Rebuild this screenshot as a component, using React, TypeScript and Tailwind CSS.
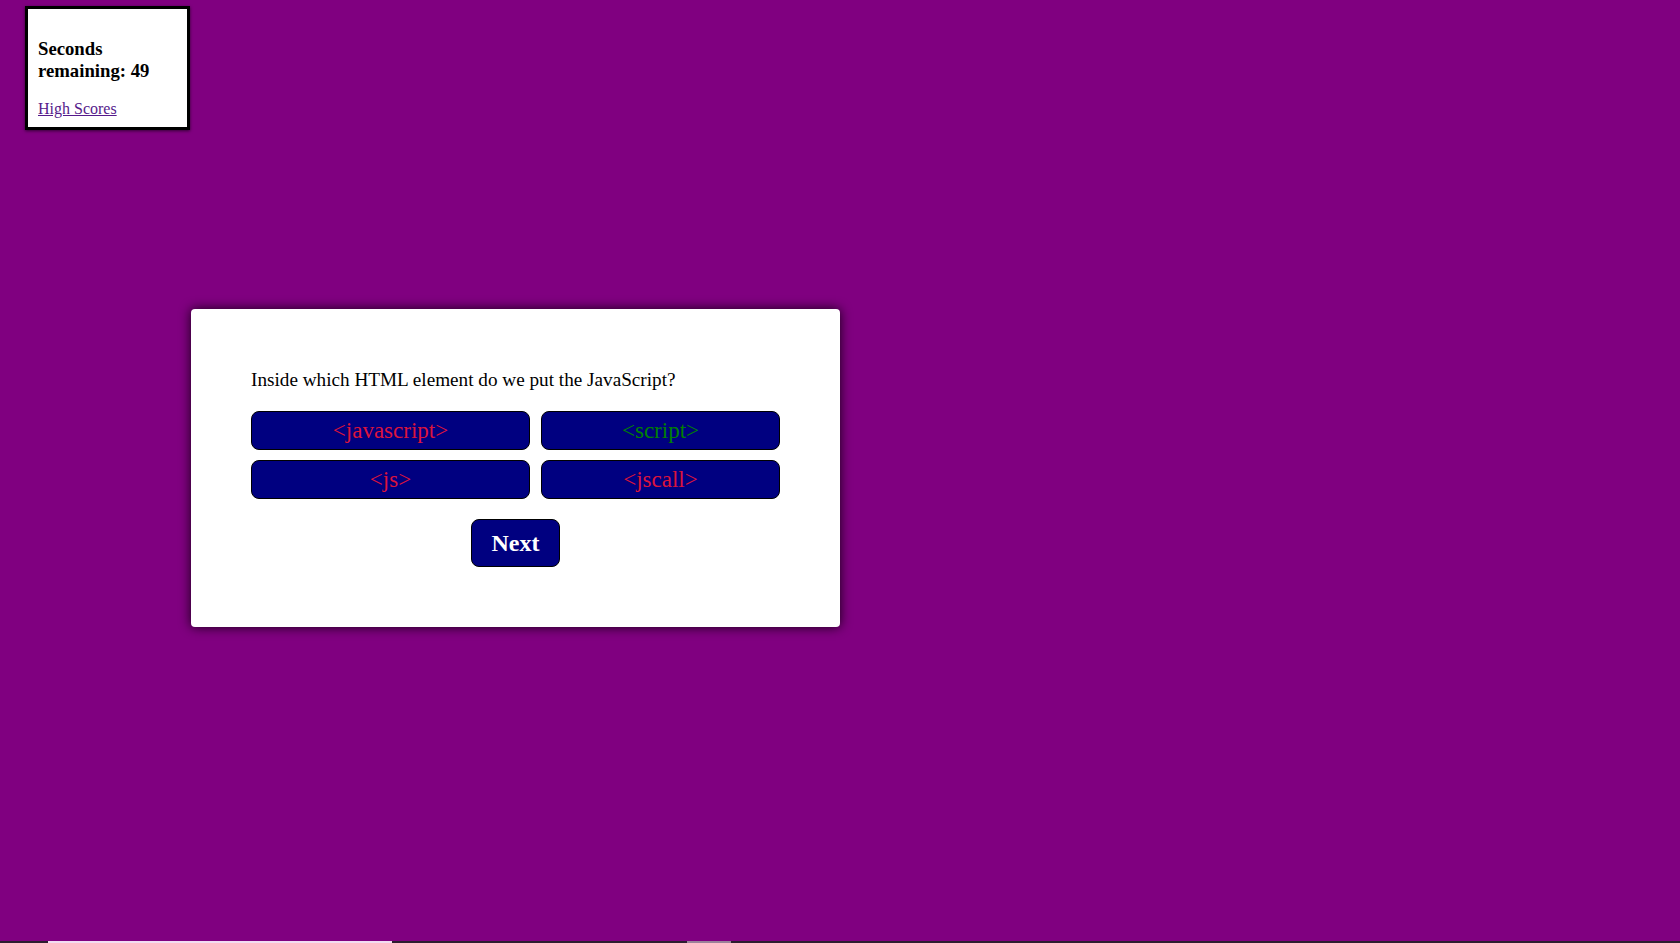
const OPTIONS = [
  { label: "<javascript>", color: "text-[#dc143c]" },
  { label: "<script>", color: "text-[#008000]" },
  { label: "<js>", color: "text-[#dc143c]" },
  { label: "<jscall>", color: "text-[#dc143c]" },
];

export default function App() {
  return (
    <div className="flex h-screen flex-col overflow-hidden bg-[#800080] font-['Liberation_Serif',serif] text-black">
      <div className="flex-1">
        {/* Timer */}
        <div className="pl-[25px] pt-[6px]">
          <div className="h-[124px] w-[165px] border-[3px] border-black bg-white p-[10px] shadow-[0_1px_3px_rgba(0,0,0,0.6)]">
            <h3 className="mb-[15px] mt-[18.72px] text-[18.72px] font-bold leading-[22px]">
              Seconds remaining: 49
            </h3>
            <a href="#" className="text-[16px] leading-[18px] text-[#551a8b] underline">
              High Scores
            </a>
          </div>
        </div>

        {/* Quiz card */}
        <div className="ml-[191px] mt-[179px] w-[649px] rounded-[4px] bg-white p-[60px] shadow-[0_0_12px_rgba(0,0,0,0.85)]">
          <p className="mb-[20px] text-[19.2px] leading-[22px]">
            Inside which HTML element do we put the JavaScript?
          </p>
          <div className="grid grid-cols-[279px_239px] gap-x-[11px] gap-y-[10px]">
            {OPTIONS.map((o) => (
              <button
                key={o.label}
                className={`flex h-[39px] items-center justify-center rounded-[8px] border border-black bg-[#000080] text-[23px] leading-none ${o.color}`}
              >
                {o.label}
              </button>
            ))}
          </div>
          <div className="mt-[20px] flex justify-center">
            <button className="flex h-[48px] w-[89px] items-center justify-center rounded-[8px] border border-black bg-[#000080] text-[24px] font-bold text-white">
              Next
            </button>
          </div>
        </div>
      </div>

      {/* bottom strip */}
      <div className="flex h-[2px] shrink-0 bg-[#2d1d30]">
        <div className="w-[48px]" />
        <div className="w-[344px] bg-[#f2dcf2]" />
        <div className="w-[295px]" />
        <div className="w-[44px] bg-[#9a829a]" />
      </div>
    </div>
  );
}
